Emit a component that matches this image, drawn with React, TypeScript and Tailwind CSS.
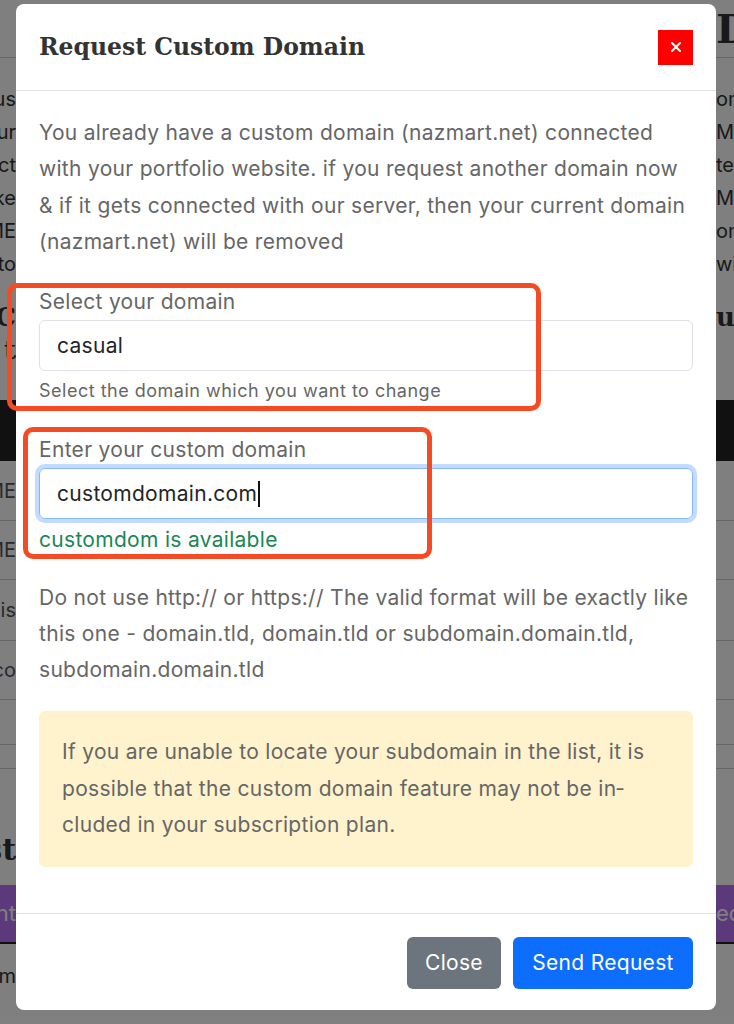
import { X } from "lucide-react";

const sans = { fontFamily: "Inter, 'Noto Sans', sans-serif" };
const slab = { fontFamily: "'DejaVu Serif', 'Liberation Serif', serif" };
const nb = "\u00A0";

// fragments of the page behind the modal: [left side, right side]
const pageLines: [string, string][] = [
  ["Your domain status", "omain"],
  ["You can use your", "ME"],
  ["to connect", "tent"],
  ["to make", "ME"],
  ["the NAME", "omain"],
  ["settings to", "with"],
];

const tableRows: [string, string][] = [
  ["NAME", "h-[60px]"],
  ["NAME", "h-[59px]"],
  ["this", "h-[61px]"],
  ["co", "h-[59px]"],
  [nb, "h-[45px]"],
  [nb, "h-[24px]"],
];

const Edge = ({ left, right, className = "" }: { left: string; right: string; className?: string }) => (
  <div className={`flex justify-between ${className}`}>
    <div className="w-4 overflow-hidden flex justify-end whitespace-nowrap">{left}</div>
    <div className="w-[18px] overflow-hidden whitespace-nowrap">{right}</div>
  </div>
);

const Background = () => (
  <div className="flex flex-col bg-white text-[#333]" style={sans}>
    <div className="h-[58px] border-b border-[#ccc] flex justify-end items-center">
      <div className="w-[18px] overflow-hidden whitespace-nowrap text-[40px] font-bold" style={slab}>
        Domain
      </div>
    </div>
    <div className="pt-[25px] flex flex-col text-[20px] leading-[33px]">
      {pageLines.map(([l, r], i) => (
        <Edge key={i} left={l} right={r} />
      ))}
    </div>
    <div className="mt-[20px] flex flex-col text-[26px] font-bold leading-[33px]" style={slab}>
      <Edge left="Domain C" right="us" />
      <Edge left="Lis t" right={nb} />
    </div>
    <div className="mt-[33px] h-[61px] bg-[#222]" />
    {tableRows.map(([t, h], i) => (
      <Edge key={i} left={t} right={nb} className={`border-b border-[#ccc] items-center text-[20px] text-[#555] ${h}`} />
    ))}
    <div className="h-[44px]" />
    <div className="h-[72px] flex items-center text-[30px] font-bold" style={slab}>
      <Edge left="Hist" right={nb} className="w-full" />
    </div>
    <div className="h-[59px] bg-[#b872f5] border-b-2 border-[#222] flex items-center text-[22px] text-white">
      <Edge left="Current" right="ed" className="w-full" />
    </div>
    <div className="h-[64px] flex items-center text-[20px]">
      <div className="w-[613px] h-full border-r border-[#ccc] flex items-center">
        <div className="w-4 overflow-hidden flex justify-end whitespace-nowrap">custom</div>
      </div>
    </div>
  </div>
);

export default function App() {
  return (
    <div className="relative w-full h-[1024px] overflow-hidden">
      <Background />

      <div className="absolute inset-0 bg-black/50">
        <div className="ml-4 mt-1 w-[700px] bg-white rounded-lg flex flex-col text-[#666] tracking-[0.3px]" style={sans}>
          {/* header */}
          <div className="h-[87px] px-[23px] flex items-center justify-between border-b border-[#dee2e6]">
            <h2 className="text-[23.5px] font-bold text-[#333] pt-[2px] tracking-normal" style={slab}>
              Request Custom Domain
            </h2>
            <button className="w-[35px] h-[35px] bg-[#ff0000] flex items-center justify-center">
              <X size={16} strokeWidth={3} color="#fff" />
            </button>
          </div>

          {/* body */}
          <div className="px-[23px] pt-6 pb-[23px] flex flex-col">
            <p className="text-[21px] leading-[36.3px]">
              You already have a custom domain (nazmart.net) connected with your portfolio website. if you request another domain now &amp; if it gets connected with our server, then your current domain (nazmart.net) will be removed
            </p>

            <label className="mt-6 text-[21px] leading-[36px]">Select your domain</label>
            <div className="h-[51px] border border-[#dee2e6] rounded-md px-[17px] flex items-center text-[21px] text-[#212529]">
              casual
            </div>
            <p className="mt-[6px] text-[18px] leading-[27px] tracking-[0.5px]">Select the domain which you want to change</p>

            <label className="mt-[28px] text-[21px] leading-[36px]">Enter your custom domain</label>
            <div className="h-[51px] border border-[#86b7fe] ring-4 ring-[#0d6efd]/25 rounded-md px-[17px] flex items-center text-[21px] text-[#212529]">
              customdomain.com
              <span className="w-[2px] h-[26px] bg-[#111] ml-[1px]" />
            </div>
            <p className="mt-[3px] text-[21px] leading-[36px] text-[#198754]">customdom is available</p>

            <p className="mt-[22px] text-[21px] leading-[36px]">
              Do not use http:// or https:// The valid format will be exactly like this one - domain.tld, domain.tld or subdomain.domain.tld, subdomain.domain.tld
            </p>

            <div className="mt-[23px] mb-[23px] bg-[#fff3cd] rounded-md px-[23px] py-[23px] text-[21px] leading-[36.5px]">
              If you are unable to locate your subdomain in the list, it is possible that the custom domain feature may not be in{"\u00AD"}cluded in your subscription plan.
            </div>
          </div>

          {/* footer */}
          <div className="border-t border-[#dee2e6] px-[23px] pt-[23px] pb-[21px] flex justify-end gap-3">
            <button className="h-[52px] w-[94px] rounded-md bg-[#6c757d] text-white text-[21px]">Close</button>
            <button className="h-[52px] w-[180px] rounded-md bg-[#0d6efd] text-white text-[21px]">Send Request</button>
          </div>
        </div>

        {/* annotation outlines */}
        <div className="absolute left-[7px] top-[283px] w-[534px] h-[128px] border-[5px] border-[#f44b24] rounded-[10px]" />
        <div className="absolute left-[23px] top-[427px] w-[409px] h-[132px] border-[5px] border-[#f44b24] rounded-[10px]" />
      </div>
    </div>
  );
}
